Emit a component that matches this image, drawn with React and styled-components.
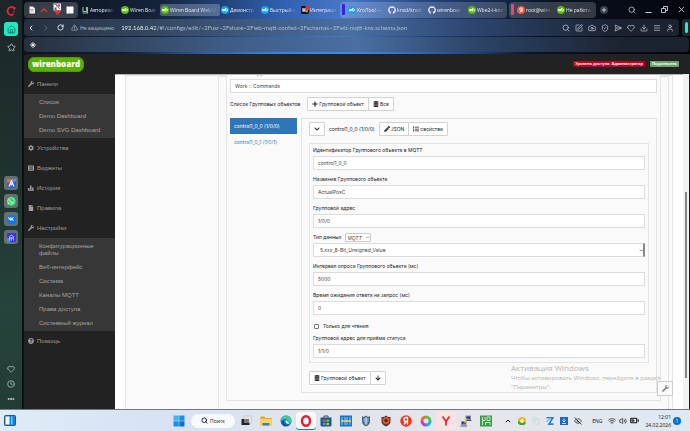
import React from "react";
import styled, { createGlobalStyle, css } from "styled-components";
import {
  BatteryMedium,
  Camera,
  ChevronDown,
  ChevronLeft,
  ChevronRight,
  ChevronUp,
  Clock,
  Copy,
  Download,
  Ellipsis,
  EyeOff,
  Heart,
  House,
  Menu,
  Plus,
  RotateCw,
  Search,
  SendHorizontal,
  ShieldCheck,
  SquarePen,
  Star,
  TriangleAlert,
  User,
  Volume2,
  Wifi,
  X,
} from "lucide-react";
import {
  FaArrowDown,
  FaChevronDown,
  FaCog,
  FaFile,
  FaGithub,
  FaList,
  FaListAlt,
  FaPencilAlt,
  FaPlus,
  FaQuestionCircle,
  FaTrashAlt,
  FaVk,
  FaWhatsapp,
  FaWrench,
} from "react-icons/fa";

const GlobalStyle = createGlobalStyle`
  * {
    box-sizing: border-box;
  }
  body {
    margin: 0;
    overflow: hidden;
    font-family: Roboto, "Liberation Sans", sans-serif;
    font-size: 6px;
  }
  button, input, select {
    font: inherit;
    color: inherit;
    margin: 0;
  }
  button {
    padding: 0;
    border: 0;
    background: none;
  }
  ul {
    margin: 0;
    padding: 0;
    list-style: none;
  }
  a {
    color: inherit;
    text-decoration: none;
  }
  svg {
    display: block;
    flex: none;
  }
`;

/* ---------- small drawings ---------- */

const WbIcon = ({ color = "#5cb80c" }) => (
  <svg width="8" height="8" viewBox="0 0 16 16">
    <circle cx="8" cy="8" r="8" fill={color} />
    <path d="M3 6v3q0 1 1 1t1-1V7v2q0 1 1 1t1-1V6M9 4v6h2.500q1.500 0 1.500-2t-1.500-2H9" fill="none" stroke="#fff" strokeWidth="1.600" />
  </svg>
);

const OperaIcon = ({ size = 12 }) => (
  <svg width={size} height={size} viewBox="0 0 24 24">
    <ellipse cx="12" cy="12" rx="8" ry="9.500" fill="none" stroke="#e8202e" strokeWidth="5" />
  </svg>
);

const OperaGxIcon = () => (
  <svg width="10" height="10" viewBox="0 0 20 20">
    <path d="M15 4A7 8 0 1 0 15 16" fill="none" stroke="#e5263b" strokeWidth="3.500" />
    <path d="M15 4Q18 10 14 16" fill="none" stroke="#a01527" strokeWidth="3" />
    <circle cx="17" cy="4" r="2" fill="#ff3c50" />
  </svg>
);

const StatsIcon = () => (
  <svg width="6" height="6" viewBox="0 0 12 12" fill="currentColor">
    <path d="M0 6h3v4H0zM4 1h3v9H4zM8 5h3v5H8zM0 10.500h12V12H0z" />
  </svg>
);

const DocIcon = () => (
  <svg width="8" height="8" viewBox="0 0 16 16">
    <path d="M3 1h7l4 4v10H3z" fill="#f1f1f1" />
    <path d="M5 7h6M5 10h6" stroke="#888" strokeWidth="1.400" />
  </svg>
);

const CaretUpIcon = () => (
  <svg width="8" height="8" viewBox="0 0 16 16">
    <path d="M2 12L8 5l6 7" fill="none" stroke="#d93a32" strokeWidth="2.500" />
  </svg>
);

const MapIcon = () => (
  <svg width="9" height="13" viewBox="0 0 18 26">
    <path d="M1 1h15v14H1z" fill="#f4f4f4" />
    <path d="M3 9h4v5H3zM9 3h5v4H9z" fill="#3a70b8" />
    <path d="M8 6l6 6M3 3h4v4" stroke="#e15a3a" strokeWidth="2" fill="none" />
    <path d="M9 25L3 17q2-4 6-2 4-2 6 2z" fill="#ee2d2d" />
  </svg>
);

const BlankIcon = () => (
  <svg width="8" height="8" viewBox="0 0 16 16">
    <path d="M1 1h14v14H1z" fill="#fff" />
    <path d="M5 12h3" stroke="#bbb" strokeWidth="1.500" />
  </svg>
);

const SchoolIcon = () => (
  <svg width="8" height="8" viewBox="0 0 16 16">
    <path d="M4 2v9h7V2M13 2v12H3" fill="none" stroke="#8fb5a4" strokeWidth="2.200" />
  </svg>
);

const IntegrationIcon = () => (
  <svg width="8" height="8" viewBox="0 0 16 16">
    <rect width="16" height="16" rx="3" fill="#111" />
    <path d="M4 4v8M4 8h4M8 4v8" stroke="#fff" strokeWidth="2.200" />
    <path d="M9 0h7v8H9z" fill="#e83434" />
    <path d="M11 8h2v5h-2z" fill="#fff" />
  </svg>
);

const RootIcon = () => (
  <svg width="8" height="8" viewBox="0 0 16 16">
    <circle cx="8" cy="8" r="8" fill="#f4553b" />
    <path d="M11 4H7.500a2 2 0 0 0 0 4.500H11M10 4v8M8 9l-2 4" fill="none" stroke="#fff" strokeWidth="1.800" />
  </svg>
);

const BookmarkIcon = () => (
  <svg width="6" height="6" viewBox="0 0 12 12" fill="none" stroke="#fff" strokeWidth="1.800">
    <path d="M6 1l5 5-5 5-5-5z M3.500 3.500l5 5M8.500 3.500l-5 5" />
  </svg>
);

const RestoreIcon = () => (
  <svg width="7" height="7" viewBox="0 0 14 14" fill="none" stroke="currentColor" strokeWidth="1.600">
    <path d="M1 5h8v8H1zM5 5V1h8v8H9" />
  </svg>
);

const MinimizeIcon = () => (
  <svg width="7" height="7" viewBox="0 0 14 14">
    <path d="M1 13h12" stroke="currentColor" strokeWidth="1.800" />
  </svg>
);

const AriaIcon = () => (
  <svg width="9" height="9" viewBox="0 0 18 18">
    <rect width="18" height="18" rx="2" fill="#3a5bd0" />
    <path d="M0 0h9v7H0z" fill="#e06b55" />
    <path d="M9 0h9v5H9z" fill="#5a9be0" />
    <path d="M4 15L9 4l5 11M9 9v4" fill="none" stroke="#fff" strokeWidth="2.400" />
  </svg>
);

const ArchIcon = () => (
  <svg width="9" height="9" viewBox="0 0 18 18">
    <rect width="18" height="18" rx="2" fill="#3f2df0" />
    <path d="M0 10h7v8H0z" fill="#2f8df5" />
    <path d="M5 15V7q4-5 8 0v8M9 8v7M5 10h8" fill="none" stroke="#b8d4ff" strokeWidth="1.800" />
  </svg>
);

const WidgetsIcon = () => (
  <svg width="12" height="11" viewBox="0 0 24 22">
    <rect x="1" y="1" width="22" height="20" rx="2" fill="#1684d8" stroke="#24597e" strokeWidth="2" />
    <path d="M3 3h8v16H3z" fill="#eef8ff" />
    <path d="M14 3h3v16h-3z" fill="#65c8ff" />
  </svg>
);

const WindowsIcon = () => (
  <svg width="12" height="12" viewBox="0 0 24 24" fill="#1a8fdf">
    <path d="M1 1h10.500v10.500H1z" fill="#3db4ee" />
    <path d="M12.500 1H23v10.500H12.500zM1 12.500h10.500V23H1z" />
    <path d="M12.500 12.500H23V23H12.500z" fill="#0b74ca" />
  </svg>
);

const TaskViewIcon = () => (
  <svg width="11" height="11" viewBox="0 0 22 22">
    <path d="M6 2h15v13H6z" fill="#e5e5e5" stroke="#b5b5b5" />
    <path d="M1 8h5v8h11v4H1z" fill="#222" />
    <path d="M6 8h10v8H6z" fill="#777" />
  </svg>
);

const FolderIcon = () => (
  <svg width="12" height="12" viewBox="0 0 24 24">
    <path d="M1 3h8l2 3h12v15H1z" fill="#e9a91d" />
    <path d="M1 8h22v13H1z" fill="#ffd35a" />
    <path d="M5 16h14v5H5z" fill="#2b82d5" />
  </svg>
);

const EdgeIcon = () => (
  <svg width="12" height="12" viewBox="0 0 24 24">
    <circle cx="12" cy="12" r="11" fill="#1b7bc9" />
    <path d="M1 11Q3 1 12 1t11 9q0 6-7 6 1-7-5-8-6 0-10 3z" fill="#40c7a0" />
    <path d="M8 11q-2 9 10 9-10 6-15-3 0-5 5-6z" fill="#154c9c" />
    <path d="M11 12q3-4 5 3 1 2 5 1l-5 2q-5-1-5-6z" fill="#eaf5fb" />
  </svg>
);

const StoreIcon = () => (
  <svg width="12" height="12" viewBox="0 0 24 24">
    <path d="M8 6V2h8v4" fill="none" stroke="#1e5379" strokeWidth="2" />
    <path d="M1 5h22v15q0 3-3 3H4q-3 0-3-3z" fill="#175b92" />
    <path d="M6 9h5v5H6z" fill="#f15a30" />
    <path d="M13 9h5v5h-5z" fill="#80bb20" />
    <path d="M6 16h5v4H6z" fill="#24aef0" />
    <path d="M13 16h5v4h-5z" fill="#f8b820" />
  </svg>
);

const HhIcon = () => (
  <svg width="12" height="12" viewBox="0 0 24 24">
    <path d="M0 1h24v22H0z" fill="#1474c8" />
    <path d="M4 4v16M10 4v16M14 4v16M20 4v16" stroke="#8ccbf4" strokeWidth="2" />
    <path d="M2 12h20" stroke="#ffd63a" strokeWidth="3" />
  </svg>
);

const ShieldIcon = () => (
  <svg width="10" height="12" viewBox="0 0 20 24">
    <path d="M2 2l4 2 4-3 4 3 4-2v11q0 6-8 10Q2 19 2 13z" fill="#45678d" />
    <path d="M5 8h10M5 12h10M7 16h6M10 4v16" stroke="#d9e8f5" strokeWidth="1.800" />
  </svg>
);

const BadgeIcon = () => (
  <svg width="10" height="12" viewBox="0 0 20 24">
    <path d="M1 4q5 1 9-3 4 4 9 3v9q0 6-9 10-9-4-9-10z" fill="#4b3b35" />
    <circle cx="10" cy="11" r="7" fill="#e35428" />
    <circle cx="10" cy="11" r="3" fill="#2a2523" />
  </svg>
);

const YaIcon = () => (
  <svg width="12" height="12" viewBox="0 0 24 24">
    <circle cx="12" cy="12" r="11.500" fill="#f3321c" />
    <path d="M15 19V5h-3q-4 0-4 4t4 4h3M12 13l-4 6" fill="none" stroke="#fff" strokeWidth="2.800" />
  </svg>
);

const RingIcon = () => (
  <svg width="12" height="12" viewBox="0 0 24 24" fill="none" strokeWidth="6">
    <path d="M12 4a8 8 0 0 1 8 8" stroke="#5cc341" />
    <path d="M20 12a8 8 0 0 1-8 8" stroke="#24a8e8" />
    <path d="M12 20a8 8 0 0 1-8-8" stroke="#b13fd0" />
    <path d="M4 12a8 8 0 0 1 8-8" stroke="#f66a2c" />
  </svg>
);

const YandexBrowserIcon = () => (
  <svg width="12" height="12" viewBox="0 0 24 24">
    <path d="M5 3l7 10 7-10M12 12v9" fill="none" stroke="#ed2a2a" strokeWidth="3.600" />
  </svg>
);

const PuttyIcon = () => (
  <svg width="12" height="12" viewBox="0 0 24 24">
    <path d="M11 1h11v9H11zM2 12h11v8H2z" fill="#8c9297" />
    <path d="M13 3h7v5h-7zM4 14h7v4H4z" fill="#2331b5" />
    <path d="M1 21h13v2H1zM10 10h13v2H10z" fill="#555" />
    <path d="M15 7l-6 5h4l-5 5" fill="none" stroke="#f3dd31" strokeWidth="2" />
  </svg>
);

const GreenIcon = () => (
  <svg width="12" height="12" viewBox="0 0 24 24">
    <path d="M0 1h24v22H0z" fill="#3b9c46" />
    <path d="M5 4v16M10 4v7H5M14 4h6v7h-6zM11 15h9v5M11 15v5" fill="none" stroke="#c7e9c9" strokeWidth="2" />
  </svg>
);

const SyncIcon = () => (
  <svg width="8" height="8" viewBox="0 0 16 16">
    <circle cx="8" cy="8" r="8" fill="#e4bd25" />
    <path d="M1 9a7 7 0 0 0 13 2" fill="none" stroke="#3c9f3d" strokeWidth="4" />
    <path d="M8 4v8M4 8h8" stroke="#fff" strokeWidth="2" />
  </svg>
);

const SwitcherIcon = () => (
  <svg width="8" height="8" viewBox="0 0 16 16">
    <path d="M1 1h13L6 14h9" fill="none" stroke="#2c83c9" strokeWidth="3.500" />
    <path d="M1 10l6-6" stroke="#8ac4ea" strokeWidth="3" />
  </svg>
);

const DownloaderIcon = () => (
  <svg width="8" height="8" viewBox="0 0 16 16">
    <path d="M0 0h16v16H0z" fill="#1668c5" />
    <path d="M8 3v7M5 7l3 3 3-3M4 13h8" fill="none" stroke="#fff" strokeWidth="1.600" />
  </svg>
);

/* ---------- browser window ---------- */

const Screen = styled.div`
  display: flex;
  flex-direction: column;
  height: 100vh;
  background: #0a1016;
`;

const Browser = styled.div`
  display: flex;
  flex: 1;
  min-height: 0;
  border-bottom: 1px solid #6f7780;
`;

const Rail = styled.nav`
  display: flex;
  flex-direction: column;
  align-items: center;
  justify-content: space-between;
  width: 22px;
  margin-right: 2px;
  padding: 6px 0 5px;
  color: #c9d0d0;
  background: linear-gradient(#1c2629, #20332f 45%, #26443b 75%, #223c35);
`;

const RailGroup = styled.div`
  display: flex;
  flex-direction: column;
  align-items: center;
  gap: ${(p) => p.$gap}px;
  padding-top: ${(p) => p.$top || 0}px;
`;

const RailButton = styled.button`
  display: flex;
  align-items: center;
  justify-content: center;
  width: 14px;
  height: ${(p) => (p.$tile ? 14 : 10)}px;
  border-radius: 3px;
  background: ${(p) => p.$tile || "none"};
`;

const Round = styled.span`
  display: flex;
  align-items: center;
  justify-content: center;
  width: 9px;
  height: 9px;
  border-radius: 5px;
  color: #fff;
  background: ${(p) => p.$color};
`;

const Window = styled.div`
  display: flex;
  flex: 1;
  flex-direction: column;
  min-width: 0;
`;

const Chrome = styled.header`
  display: flex;
  flex-direction: column;
  gap: 1px;
  height: 54px;
  padding-top: 1px;
  color: #e9edf3;
  background:
    linear-gradient(90deg, transparent 15%, #3a8be8 45%, transparent 75%) bottom / 100% 2px no-repeat,
    linear-gradient(100deg, #0b111b, #14233b 20%, #2f5fae 38%, #4878c8 48%, #1d3c70 62%, #0a1222 78%, #03050b);
`;

const TabStrip = styled.div`
  display: flex;
  align-items: center;
  height: 17px;
`;

const TabGroup = styled.div`
  display: flex;
  align-items: center;
  height: 16px;
  margin-right: 2px;
  padding-left: ${(p) => (p.$bar ? 2 : 0)}px;
  border-radius: 4px;
  background: rgba(255, 255, 255, 0.18);
`;

const GroupBar = styled.span`
  width: 3px;
  height: 11px;
  margin-right: 2px;
  border-radius: 1px;
  background: ${(p) => p.$color};
`;

const PinnedTabs = styled(TabGroup)`
  justify-content: space-around;
  width: 54px;
  padding: 0 2px;
`;

const TabButton = styled.button`
  display: flex;
  align-items: center;
  gap: 1px;
  width: ${(p) => (p.$active ? 60 : 40)}px;
  height: 12px;
  padding-left: 1px;
  border-radius: 2px;
  font: 5px/8px "Open Sans", "Noto Sans", sans-serif;
  background: ${(p) => (p.$active ? "rgba(200, 215, 235, 0.3)" : "none")};
  span {
    white-space: nowrap;
    mask-image: linear-gradient(90deg, #000 65%, rgba(0, 0, 0, 0.2));
  }
`;

const NewTab = styled.button`
  display: flex;
  align-items: center;
  justify-content: center;
  width: 8px;
  height: 8px;
  margin-left: 2px;
  border-radius: 4px;
  background: #3a3f48;
`;

const WindowButtons = styled.div`
  display: flex;
  gap: 9px;
  margin-left: auto;
  padding-right: 4px;
`;

const AddressRow = styled.div`
  display: flex;
  gap: 3px;
  height: 17px;
`;

const AddressBar = styled.div`
  display: flex;
  flex: 1;
  align-items: center;
  gap: 7px;
  padding: 0 5px 0 3px;
  border-radius: 4px;
  background: linear-gradient(90deg, #27303d, #3b5475 30%, #4a6fa3 50%, #2d4670 68%, #1b2230 90%);
`;

const Warning = styled.span`
  display: flex;
  align-items: center;
  gap: 2px;
  font: 5px/8px "Open Sans", "Noto Sans", sans-serif;
  color: #bcc6d4;
`;

/* host part is brighter than the path */
const AddressInput = styled.input`
  flex: 1;
  min-width: 0;
  padding: 0;
  border: 0;
  font-family: Lato, Roboto, sans-serif;
  color: transparent;
  background: linear-gradient(90deg, #fff 34px, #b9c5d8 34px);
  background-clip: text;
`;

const Extensions = styled.div`
  display: flex;
  gap: 5px;
  color: #cdd3dc;
`;

const SidePanelToggle = styled.button`
  width: 8px;
  border-radius: 3px 0 0 3px;
  background: #20272f;
  &::before {
    content: "";
    display: block;
    width: 3px;
    height: 11px;
    margin: 0 auto;
    border-radius: 2px;
    background: #2ceac6;
  }
`;

const Bookmarks = styled.div`
  display: flex;
  align-items: center;
  height: 15px;
  margin-right: 1px;
  padding-left: 6px;
  border-radius: 4px;
  background: linear-gradient(90deg, #27303d, #3e5c84 30%, #4a6fa3 50%, #2c4468 68%, #1c2330 90%);
`;

/* ---------- wirenboard page ---------- */

const Page = styled.div`
  display: flex;
  flex: 1;
  flex-direction: column;
  min-height: 0;
  border-radius: 3px 0 0;
  background: #222;
`;

const Navbar = styled.header`
  display: flex;
  align-items: center;
  gap: 5px;
  height: 20px;
  padding: 0 11px 0 4px;
`;

const Brand = styled.a`
  height: 15px;
  margin-right: auto;
  padding: 0 3px;
  border: 1px solid #4f9a06;
  border-radius: 6px;
  font: 800 8px/12px "Open Sans", sans-serif;
  color: #fff;
  background: #5cb008;
`;

const Status = styled.span`
  padding: 0 2px;
  border-radius: 1px;
  font: bold 4px/6px "Liberation Sans", sans-serif;
  color: #fff;
  background: ${(p) => p.$color};
`;

const Columns = styled.div`
  display: flex;
  flex: 1;
  min-height: 0;
`;

const Sidebar = styled.nav`
  width: 91px;
  font-family: "Liberation Sans", Arial, sans-serif;
  color: #9d9d9d;
`;

const MenuLink = styled.a`
  display: flex;
  align-items: center;
  gap: 3px;
  height: 20px;
  padding-left: 4px;
`;

const Submenu = styled.ul`
  padding: 1px 0;
  color: #a5a5a5;
  background: #373737;
  a {
    display: block;
    padding: 4px 10px 3px 15px;
    line-height: 7px;
  }
`;

const Main = styled.main`
  flex: 1;
  min-width: 0;
  overflow: hidden;
  padding: 0 10px;
  border-top: 1px solid #b5b5b5;
  font-family: Inter, "Liberation Sans", sans-serif;
  font-size: 5px;
  color: #222;
  background: #fff;
`;

const frame = css`
  border: 1px solid #e4e4e4;
  background: #fafafa;
`;

const Channels = styled.div`
  ${frame}
  display: grid;
  grid-template-columns: 92px 1fr;
  padding-right: 3px;
`;

const Channel = styled.div`
  ${frame}
  grid-column: 2;
  padding: 0 7px 20px;
`;

const Group = styled.div`
  ${frame}
  margin-top: -10px;
  padding: 0 3px 7px;
`;

const Label = styled.label`
  display: block;
  line-height: 11px;
`;

const control = css`
  width: 100%;
  height: 14px;
  padding: 0 4px;
  border: 1px solid #dcdcdc;
  color: #444;
  background: #fff;
`;

const TextInput = styled.input`
  ${control}
  display: block;
`;

const ListHeader = styled.div`
  display: flex;
  align-items: center;
  gap: 7px;
  margin: 4px 0 7px;
`;

const ButtonGroup = styled.div`
  display: flex;
`;

const Button = styled.button`
  display: flex;
  align-items: center;
  gap: 1px;
  height: 14px;
  padding: 0 4px;
  border: 1px solid #d2d2d2;
  border-radius: 1px;
  background: #fff;
  & + & {
    margin-left: -1px;
  }
`;

const Split = styled.div`
  display: grid;
  grid-template-columns: 67px 1fr;
  gap: 4px;
`;

const ObjectLink = styled.a`
  display: block;
  padding-left: 4px;
  line-height: 16px;
  color: ${(p) => (p.$active ? "#fff" : "#337ab7")};
  background: ${(p) => (p.$active ? "#2f76b8" : "none")};
`;

const ObjectPanel = styled.section`
  ${frame}
  padding: 3px 7px 7px;
`;

const ObjectHeader = styled.div`
  display: flex;
  align-items: center;
  gap: 4px;
  margin-bottom: 7px;
`;

const Fields = styled.div`
  ${frame}
  display: flex;
  flex-direction: column;
  gap: 4px;
  margin-bottom: 8px;
  padding: 1px 3px 4px;
`;

const LabelRow = styled.div`
  display: flex;
  align-items: center;
  gap: 3px;
`;

const SelectBox = styled.div`
  display: grid;
  align-items: center;
  > * {
    grid-area: 1 / 1;
  }
  svg {
    justify-self: end;
    margin-right: 1px;
    pointer-events: none;
  }
`;

const Select = styled.select`
  ${control}
  padding-left: 6px;
  border-right: 2px solid #888;
  border-radius: 0;
  appearance: none;
`;

const SmallSelect = styled.select`
  width: 26px;
  height: 9px;
  padding: 0 2px;
  border: 1px solid #ccc;
  border-radius: 1px;
  font-family: "Liberation Sans", Arial, sans-serif;
  font-style: italic;
  color: #444;
  background: #fff;
  appearance: none;
`;

const CheckRow = styled.label`
  display: flex;
  align-items: center;
  gap: 4px;
  height: 14px;
  margin-bottom: -4px;
  padding: 0 1px;
  input {
    width: 5px;
    height: 5px;
    border: 1px solid #777;
    border-radius: 1px;
    background: #fff;
    appearance: none;
  }
`;

const Scrollbar = styled.div`
  display: flex;
  flex-direction: column;
  width: 7px;
  padding: 0 2px;
  border-right: 1px solid #222;
  background: #f1f1f1;
  &::before {
    content: "";
    flex: 118;
  }
  &::after {
    content: "";
    flex: 31;
  }
`;

const Thumb = styled.span`
  flex: 186;
  width: 2px;
  background: #858585;
`;

const Debug = styled.button`
  position: absolute;
  right: 17px;
  bottom: 35px;
  display: flex;
  align-items: center;
  justify-content: center;
  width: 16px;
  height: 15px;
  border: 1px solid #ccc;
  color: #888;
  background: #fafafa;
`;

const Activation = styled.div`
  position: absolute;
  right: 27px;
  bottom: 39px;
  width: 152px;
  font: 6px/9px "Open Sans", "Noto Sans", sans-serif;
  color: #b4b4b4;
  pointer-events: none;
  strong {
    display: block;
    font-size: 8px;
    font-weight: 400;
    line-height: 12px;
  }
`;

/* ---------- windows taskbar ---------- */

const Taskbar = styled.footer`
  display: grid;
  grid-template-columns: 169px auto 1fr;
  align-items: center;
  height: 21px;
  font-family: "Open Sans", "Noto Sans", sans-serif;
  font-size: 5px;
  color: #111;
  background: linear-gradient(90deg, #dfecf7, #d7e2f3 22%, #e2e4ea 45%, #e6e5ea 70%, #dfe9f3);
`;

const TaskRow = styled.div`
  display: flex;
  align-items: center;
`;

const TaskButton = styled.button`
  display: flex;
  align-items: center;
  justify-content: center;
  width: 20px;
  height: 18px;
  border-radius: 3px;
  background: ${(p) => p.$bg || "none"};
  box-shadow: ${(p) => (p.$mark ? `inset 0 -1px ${p.$mark}` : "none")};
`;

const SearchPill = styled.button`
  display: flex;
  align-items: center;
  justify-content: center;
  gap: 2px;
  width: 44px;
  height: 14px;
  margin: 0 1px 0 2px;
  border-radius: 7px;
  background: #f6f9fd;
`;

const Tray = styled.div`
  display: flex;
  align-items: center;
  justify-content: flex-end;
  gap: ${(p) => p.$gap}px;
  padding: 0 ${(p) => p.$right || 0}px 0 ${(p) => p.$left || 0}px;
`;

const ClockText = styled.time`
  margin-left: 5px;
  line-height: 8px;
  text-align: right;
`;

const Notice = styled.span`
  width: 8px;
  height: 8px;
  border-radius: 4px;
  line-height: 8px;
  text-align: center;
  color: #fff;
  background: #0a6fc8;
`;

const Tab = ({ icon, title, active }) => (
  <TabButton $active={active}>
    {icon}
    <span>{title}</span>
  </TabButton>
);

const Field = ({ id, label, value }) => (
  <div>
    <Label htmlFor={id}>{label}</Label>
    <TextInput id={id} defaultValue={value} />
  </div>
);

const MenuItem = ({ icon, title, items }) => (
  <li>
    <MenuLink href="#">
      {icon}
      {title}
    </MenuLink>
    {items && (
      <Submenu>
        {items.map((item) => (
          <li key={item}>
            <a href="#">{item}</a>
          </li>
        ))}
      </Submenu>
    )}
  </li>
);

const BrowserRail = () => (
  <Rail>
    <RailGroup $gap={6}>
      <RailButton aria-label="Opera"><OperaGxIcon /></RailButton>
      <RailButton aria-label="Home" $tile="#20e8c0"><House size={9} color="#14675a" /></RailButton>
      <RailButton aria-label="Favorites"><Star size={9} /></RailButton>
    </RailGroup>
    <RailGroup $gap={4} $top={4}>
      <RailButton aria-label="Aria" $tile="#66706f"><AriaIcon /></RailButton>
      <RailButton aria-label="WhatsApp" $tile="#66706f">
        <Round $color="#25d366"><FaWhatsapp size={8} /></Round>
      </RailButton>
      <RailButton aria-label="VK" $tile="#66706f">
        <Round $color="#0077ff"><FaVk size={6} /></Round>
      </RailButton>
      <RailButton aria-label="Max" $tile="#66706f"><ArchIcon /></RailButton>
    </RailGroup>
    <RailGroup $gap={5}>
      <RailButton aria-label="Likes"><Heart size={8} /></RailButton>
      <RailButton aria-label="History"><Clock size={8} /></RailButton>
      <RailButton aria-label="More"><Ellipsis size={8} strokeWidth={4} /></RailButton>
    </RailGroup>
  </Rail>
);

const BrowserChrome = () => (
  <Chrome>
    <TabStrip>
      <PinnedTabs>
        <DocIcon />
        <CaretUpIcon />
        <MapIcon />
        <BlankIcon />
      </PinnedTabs>
      <Tab icon={<SchoolIcon />} title="Авториза" />
      <Tab icon={<WbIcon />} title="Wiren Boar" />
      <Tab icon={<WbIcon />} title="Wiren Board Web U" active />
      <Tab icon={<WbIcon color="#1aa0e8" />} title="Демонстр" />
      <Tab icon={<WbIcon color="#1aa0e8" />} title="Быстрый с" />
      <Tab icon={<IntegrationIcon />} title="Интеграци" />
      <TabGroup $bar>
        <GroupBar $color="#3a1fe8" />
        <Tab icon={<WbIcon color="#1aa0e8" />} title="KnxTool —" />
        <Tab icon={<FaGithub size={8} />} title="knxd/knxd" />
        <Tab icon={<FaGithub size={8} />} title="wirenboar" />
        <Tab icon={<WbIcon />} title="Wbe2-i-knx" />
      </TabGroup>
      <TabGroup $bar>
        <GroupBar $color="#f5435c" />
        <Tab icon={<RootIcon />} title="root@wire" />
        <Tab icon={<WbIcon />} title="Не работа" />
      </TabGroup>
      <NewTab aria-label="New tab"><Plus size={6} strokeWidth={3} /></NewTab>
      <WindowButtons>
        <button aria-label="Search tabs"><Search size={8} /></button>
        <button aria-label="Minimize"><MinimizeIcon /></button>
        <button aria-label="Restore"><RestoreIcon /></button>
        <button aria-label="Close"><X size={9} /></button>
      </WindowButtons>
    </TabStrip>
    <AddressRow>
      <AddressBar>
        <button aria-label="Back"><ChevronLeft size={8} strokeWidth={3} /></button>
        <button aria-label="Forward"><ChevronRight size={8} color="#78818f" /></button>
        <button aria-label="Reload"><RotateCw size={7} strokeWidth={3} /></button>
        <Warning><TriangleAlert size={7} />Не защищено</Warning>
        <AddressInput
          aria-label="Address"
          defaultValue="192.168.0.42/#!/configs/edit/~2Fusr~2Fshare~2Fwb-mqtt-confed~2Fschemas~2Fwb-mqtt-knx.schema.json"
        />
        <Extensions>
          <Search size={8} />
          <SquarePen size={8} />
          <Camera size={8} />
          <ShieldCheck size={8} />
          <SendHorizontal size={8} />
          <Heart size={8} />
          <Download size={8} />
          <Menu size={8} />
          <User size={8} />
        </Extensions>
      </AddressBar>
      <SidePanelToggle aria-label="Side panel" />
    </AddressRow>
    <Bookmarks><BookmarkIcon /></Bookmarks>
  </Chrome>
);

const PageSidebar = () => (
  <Sidebar>
    <ul>
      <MenuItem icon={<FaWrench size={6} />} title="Панели" items={["Список", "Demo Dashboard", "Demo SVG Dashboard"]} />
      <MenuItem icon={<FaCog size={6} />} title="Устройства" />
      <MenuItem icon={<FaListAlt size={6} />} title="Виджеты" />
      <MenuItem icon={<StatsIcon />} title="История" />
      <MenuItem icon={<FaFile size={6} />} title="Правила" />
      <MenuItem
        icon={<FaWrench size={6} />}
        title="Настройки"
        items={[
          "Конфигурационные файлы",
          "Веб-интерфейс",
          "Система",
          "Каналы MQTT",
          "Права доступа",
          "Системный журнал",
        ]}
      />
      <MenuItem icon={<FaQuestionCircle size={6} />} title="Помощь" />
    </ul>
  </Sidebar>
);

const ConfigEditor = () => (
  <Main>
    <Channels>
      <Channel>
        <Group>
          <Field id="group-name" label="Название группы" value="Work :: Commands" />
          <ListHeader>
            Список Групповых объектов
            <ButtonGroup>
              <Button><FaPlus size={6} />Групповой объект</Button>
              <Button><FaTrashAlt size={6} />Все</Button>
            </ButtonGroup>
          </ListHeader>
          <Split>
            <div>
              <ObjectLink href="#" $active>control1_0_0 (1/0/0)</ObjectLink>
              <ObjectLink href="#">control1_0_1 (1/0/1)</ObjectLink>
            </div>
            <ObjectPanel>
              <ObjectHeader>
                <Button aria-label="Свернуть"><FaChevronDown size={6} /></Button>
                control1_0_0 (1/0/0)
                <ButtonGroup>
                  <Button><FaPencilAlt size={6} />JSON</Button>
                  <Button><FaList size={6} />свойства</Button>
                </ButtonGroup>
              </ObjectHeader>
              <Fields>
                <Field id="object-id" label="Идентификатор Группового объекта в MQTT" value="control1_0_0" />
                <Field id="object-name" label="Название Группового объекта" value="ActualPosC" />
                <Field id="address" label="Групповой адрес" value="1/0/0" />
                <div>
                  <LabelRow>
                    <Label htmlFor="data-type">Тип данных</Label>
                    <SelectBox>
                      <SmallSelect aria-label="Источник типа"><option>MQTT</option></SmallSelect>
                      <ChevronDown size={5} />
                    </SelectBox>
                  </LabelRow>
                  <SelectBox>
                    <Select id="data-type"><option>5.xxx_8-Bit_Unsigned_Value</option></Select>
                    <ChevronDown size={5} strokeWidth={3} />
                  </SelectBox>
                </div>
                <Field id="poll" label="Интервал опроса Группового объекта (мс)" value="5000" />
                <Field id="timeout" label="Время ожидания ответа на запрос (мс)" value="0" />
                <CheckRow><input type="checkbox" />Только для чтения</CheckRow>
                <Field id="feedback" label="Групповой адрес для приёма статуса" value="1/1/0" />
              </Fields>
              <ButtonGroup>
                <Button><FaTrashAlt size={6} />Групповой объект</Button>
                <Button aria-label="Вниз"><FaArrowDown size={6} /></Button>
              </ButtonGroup>
            </ObjectPanel>
          </Split>
        </Group>
      </Channel>
    </Channels>
  </Main>
);

const WindowsTaskbar = () => (
  <Taskbar>
    <TaskRow><TaskButton aria-label="Мини-приложения"><WidgetsIcon /></TaskButton></TaskRow>
    <TaskRow>
      <TaskButton aria-label="Пуск"><WindowsIcon /></TaskButton>
      <SearchPill><Search size={7} strokeWidth={3} />Поиск</SearchPill>
      <TaskButton><TaskViewIcon /></TaskButton>
      <TaskButton><FolderIcon /></TaskButton>
      <TaskButton><EdgeIcon /></TaskButton>
      <TaskButton $bg="#f8f8fb" $mark="#1f78c8"><OperaIcon /></TaskButton>
      <TaskButton><StoreIcon /></TaskButton>
      <TaskButton><HhIcon /></TaskButton>
      <TaskButton><ShieldIcon /></TaskButton>
      <TaskButton><BadgeIcon /></TaskButton>
      <TaskButton><YaIcon /></TaskButton>
      <TaskButton><RingIcon /></TaskButton>
      <TaskButton $bg="#fbe3e5"><YandexBrowserIcon /></TaskButton>
      <TaskButton><PuttyIcon /></TaskButton>
      <TaskButton><GreenIcon /></TaskButton>
    </TaskRow>
    <Tray $gap={2} $right={9}>
      <Tray $gap={6} $right={8}>
        <ChevronUp size={8} strokeWidth={3} />
        <SyncIcon />
        <Copy size={8} color="#c3d3e2" />
        <SwitcherIcon />
        <DownloaderIcon />
        <EyeOff size={8} />
      </Tray>
      ENG
      <Tray $gap={3} $left={3}>
        <Wifi size={8} />
        <Volume2 size={8} />
        <BatteryMedium size={9} strokeWidth={3} />
      </Tray>
      <ClockText>12:01<br />24.02.2026</ClockText>
      <Notice>1</Notice>
    </Tray>
  </Taskbar>
);

export default function App() {
  return (
    <Screen>
      <GlobalStyle />
      <Browser>
        <BrowserRail />
        <Window>
          <BrowserChrome />
          <Page>
            <Navbar>
              <Brand href="#">wirenboard</Brand>
              <Status $color="#b8001f">Уровень доступа: Администратор</Status>
              <Status $color="#69a169">Подключено</Status>
            </Navbar>
            <Columns>
              <PageSidebar />
              <ConfigEditor />
              <Scrollbar><Thumb /></Scrollbar>
            </Columns>
          </Page>
        </Window>
      </Browser>
      <Debug aria-label="Отладка"><FaWrench size={7} /></Debug>
      <Activation>
        <strong>Активация Windows</strong>
        Чтобы активировать Windows, перейдите в раздел "Параметры".
      </Activation>
      <WindowsTaskbar />
    </Screen>
  );
}
